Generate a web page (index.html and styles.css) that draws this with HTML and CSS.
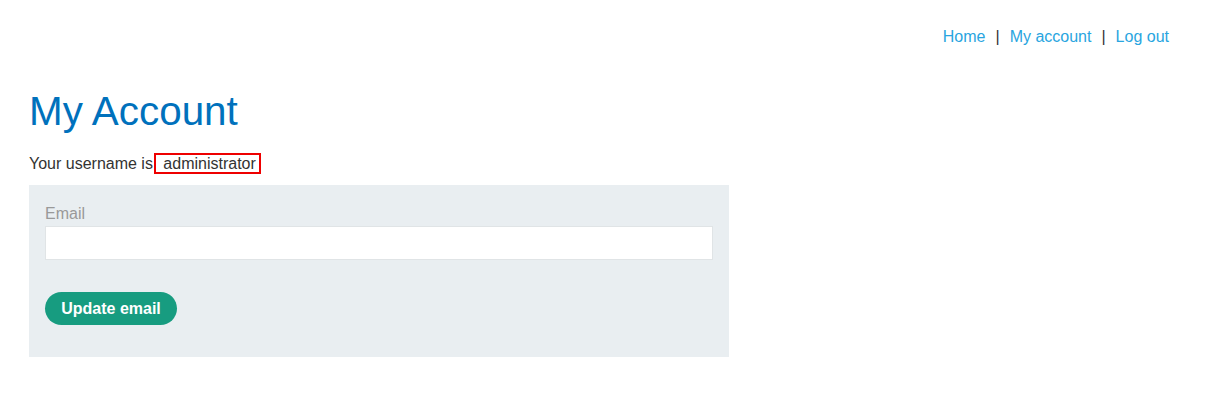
FILE: index.html
```html
<!DOCTYPE html>
<html>
<head>
<meta charset="utf-8">
<link rel="stylesheet" href="styles.css">
</head>
<body>
<div class="page">
  <nav class="nav">
    <a href="#">Home</a><span class="sep">|</span><a href="#">My account</a><span class="sep">|</span><a href="#">Log out</a>
  </nav>
  <h1 class="title">My Account</h1>
  <p class="username">Your username is<span class="user-box"> administrator </span></p>
  <form class="email-form">
    <label class="label">Email</label>
    <input class="input" type="email">
    <button class="btn" type="button">Update email</button>
  </form>
</div>
</body>
</html>
```

FILE: styles.css
```css
html, body {
  margin: 0;
  padding: 0;
  background: #fff;
}
body {
  font-family: "Liberation Sans", Arial, sans-serif;
  font-size: 16px;
  color: #333332;
}
.page {
  padding: 27px 47px 0 29px;
}
.nav {
  display: flex;
  justify-content: flex-end;
  align-items: center;
  line-height: 20px;
}
.nav a {
  color: #29a5e0;
  text-decoration: none;
}
.sep {
  margin: 0 10px;
  color: #333332;
}
.title {
  margin: 41px 0 0;
  font-size: 40.4px;
  font-weight: normal;
  color: #0071bc;
  line-height: 46px;
}
.username {
  margin: 20px 0 0;
  line-height: 19px;
}
.user-box {
  border: 2px solid #e00;
  margin-left: 1px;
  padding: 0 3px 0 3px;
}
.email-form {
  width: 700px;
  box-sizing: border-box;
  margin-top: 12px;
  background: #e9eef1;
  padding: 19px 16px 32px;
  display: flex;
  flex-direction: column;
  align-items: flex-start;
}
.label {
  color: #999;
  line-height: 19px;
  margin-bottom: 3px;
}
.input {
  width: 100%;
  height: 34px;
  box-sizing: border-box;
  border: 1px solid #e0e4e6;
  background: #fff;
  margin: 0 0 32px;
}
.btn {
  font-family: "Liberation Sans", Arial, sans-serif;
  font-size: 16px;
  font-weight: bold;
  color: #fff;
  background: #179c80;
  border: none;
  border-radius: 17px;
  height: 33px;
  width: 132px;
  padding: 0;
}
```
